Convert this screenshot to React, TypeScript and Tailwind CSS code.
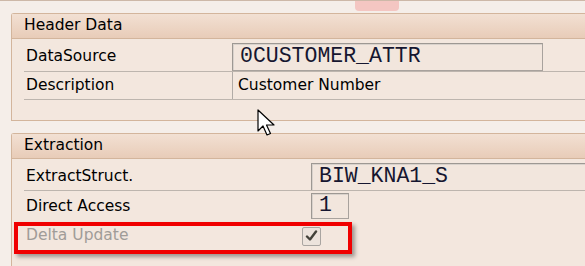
export default function App() {
  const label = "text-[15.5px] text-[#000000] leading-none";
  const mono = "font-['Liberation_Mono',monospace] text-[21.5px] text-[#161630] leading-none";
  return (
    <div className="relative w-[585px] h-[266px] overflow-hidden bg-[#f5eee9] border-t border-[#cdb8a8] font-['DejaVu_Sans',sans-serif]">
      {/* pink tab at top */}
      <div className="absolute left-[355px] top-0 w-[44px] h-[10px] rounded-b-[4px] bg-[#f4c6c2]" />

      {/* Header Data */}
      <div className="ml-[11px] mt-[12px] h-[108px] border-l border-t border-b border-[#d3b59c] bg-[#f3e7de] rounded-tl-[3px]">
        <div className="h-[25px] flex items-center pl-[12px] bg-gradient-to-b from-[#f2e0d3] to-[#e8ccb8] border-b border-[#d3b59c]">
          <span className={label}>Header Data</span>
        </div>
        <div className="pt-[4px]">
          <div className="flex h-[29px] ml-[12px] border-b border-[#bdb5ae]">
            <div className="w-[208px] flex items-center pl-[2px]">
              <span className={label}>DataSource</span>
            </div>
            <div className="w-[311px] h-[28px] flex items-center pl-[7px] border border-[#a8a29d] border-t-[#9d9893] border-l-[#9d9893] shadow-[inset_1px_1px_0_#d9d2cc] bg-[#f2e6dd]">
              <span className={mono}>0CUSTOMER_ATTR</span>
            </div>
          </div>
          <div className="flex h-[28px] ml-[12px] border-b border-[#bdb5ae]">
            <div className="w-[208px] flex items-center pl-[2px]">
              <span className={label}>Description</span>
            </div>
            <div className="flex-1 flex items-center pl-[5px] border-l border-[#b1aba6]">
              <span className={label}>Customer Number</span>
            </div>
          </div>
        </div>
      </div>

      {/* Extraction */}
      <div className="ml-[11px] mt-[12px] h-[140px] border-l border-t border-[#d3b59c] bg-[#f3e7de] rounded-tl-[3px]">
        <div className="h-[25px] flex items-center pl-[12px] bg-gradient-to-b from-[#f2e0d3] to-[#e8ccb8] border-b border-[#d3b59c]">
          <span className={label}>Extraction</span>
        </div>
        <div className="pt-[4px]">
          <div className="flex h-[28px] ml-[12px] border-b border-[#bdb5ae]">
            <div className="w-[287px] flex items-center pl-[2px]">
              <span className={label}>ExtractStruct.</span>
            </div>
            <div className="flex-1 h-[27px] flex items-center pl-[7px] border-l border-t border-[#9d9893] shadow-[inset_1px_1px_0_#d9d2cc] bg-[#f2e6dd]">
              <span className={mono}>BIW_KNA1_S</span>
            </div>
          </div>
          <div className="flex h-[29px] ml-[12px] pt-[2px]">
            <div className="w-[287px] flex items-center pl-[2px]">
              <span className={label}>Direct Access</span>
            </div>
            <div className="w-[38px] h-[26px] flex items-center pl-[7px] border border-[#a8a29d] border-t-[#9d9893] border-l-[#9d9893] shadow-[inset_1px_1px_0_#d9d2cc] bg-[#f2e6dd]">
              <span className={mono}>1</span>
            </div>
          </div>
          <div className="flex h-[32px] ml-[12px]">
            <div className="w-[278px] flex items-center pl-[2px]">
              <span className="text-[15.5px] text-[#a09c98] leading-none">Delta Update</span>
            </div>
            <div className="flex items-center">
              <div className="w-[19px] h-[19px] flex items-center justify-center border border-[#a9a5a1] bg-[#ece3dc] rounded-[2px]">
                <svg width="13" height="12" viewBox="0 0 13 12">
                  <path d="M2 6.5 L5 9.5 L11 1.5" fill="none" stroke="#43423a" strokeWidth="2.4" strokeLinecap="round" strokeLinejoin="round" />
                </svg>
              </div>
            </div>
          </div>
        </div>
      </div>

      {/* red highlight */}
      <div className="absolute left-[14px] top-[221px] w-[338px] h-[32px] border-[4px] border-[#f00000] shadow-[3px_3px_4px_rgba(0,0,0,0.35)]" />

      {/* mouse cursor */}
      <svg className="absolute left-[257px] top-[108px]" width="20" height="28" viewBox="0 0 20 28">
        <path d="M1 1 L1 22 L6 17 L10 26 L13.5 24.5 L9.5 16 L17 16 Z" fill="#ffffff" stroke="#000000" strokeWidth="1.2" strokeLinejoin="round" />
      </svg>
    </div>
  );
}
